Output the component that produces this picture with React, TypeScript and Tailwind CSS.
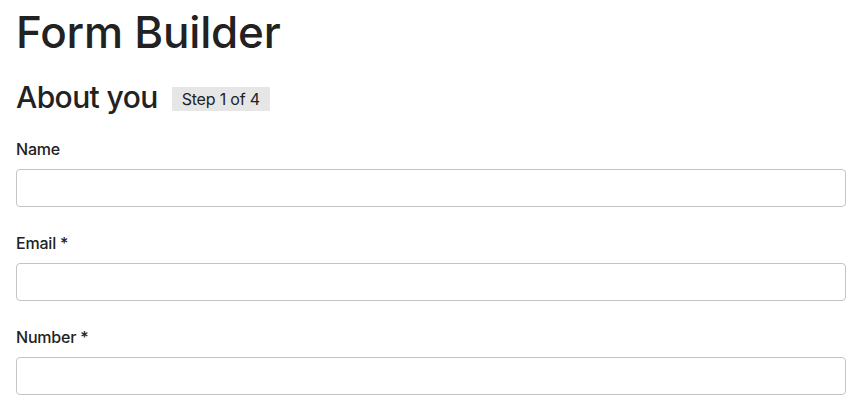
export default function App() {
  const fields = [
    { label: "Name", required: false },
    { label: "Email", required: true },
    { label: "Number", required: true },
  ];

  return (
    <main className="min-h-screen bg-white px-4 text-[#222] font-['Inter',sans-serif]">
      <h1 className="pt-[6px] text-[44px] leading-[52px] tracking-[-0.2px] font-medium">Form Builder</h1>

      <div className="mt-[21px] flex items-center gap-[14px]">
        <h2 className="text-[30px] leading-[36px] tracking-[-0.6px] font-medium">About you</h2>
        <span className="mt-[3px] bg-[#e6e6e6] px-[10px] py-[2px] text-[16px] leading-[20px] tracking-[-0.2px]">
          Step 1 of 4
        </span>
      </div>

      <form className="mt-[24px] flex flex-col gap-[26px] mr-[1px]">
        {fields.map((f) => (
          <div key={f.label} className="flex flex-col gap-[10px]">
            <label className="text-[16px] leading-[20px] font-medium tracking-[-0.2px]">
              {f.label}
              {f.required && " *"}
            </label>
            <input
              type="text"
              className="h-[38px] w-full rounded-[4px] border border-[#c4c4c4] bg-white px-3 outline-none"
            />
          </div>
        ))}
      </form>
    </main>
  );
}
